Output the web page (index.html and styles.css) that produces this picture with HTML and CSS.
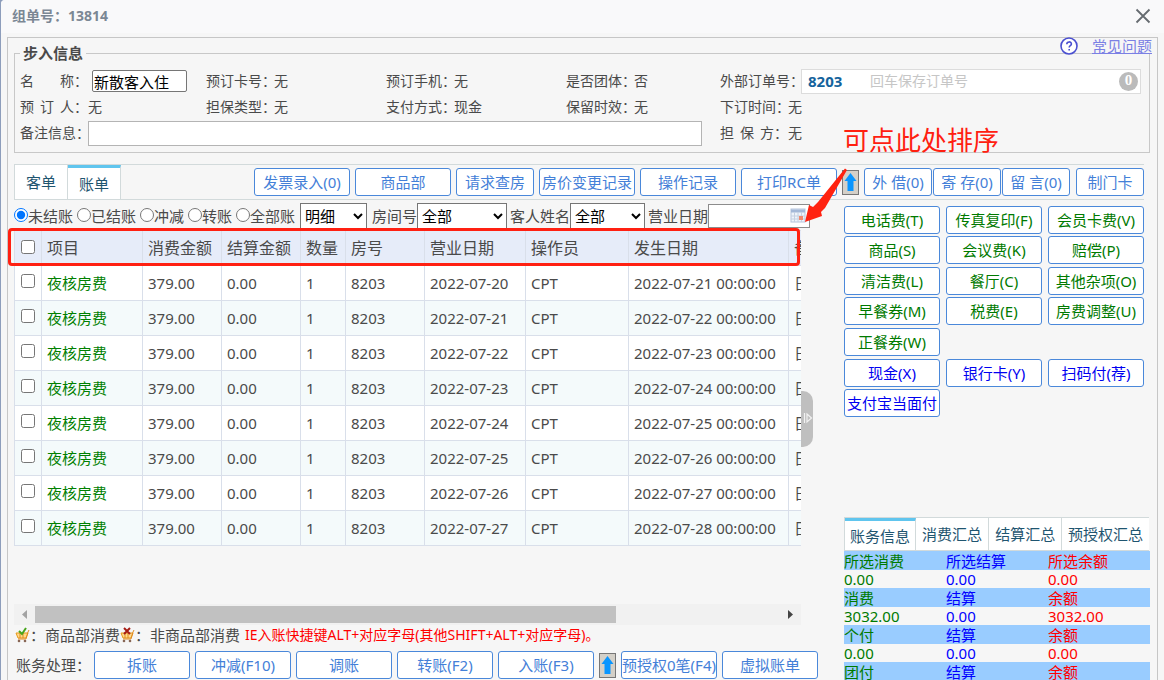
FILE: index.html
```html
<!DOCTYPE html>
<html lang="zh-CN">
<head>
<meta charset="utf-8">
<title>组单号：13814</title>
<link rel="stylesheet" href="styles.css">
</head>
<body>
<div class="window">
  <header class="titlebar">
    <h1>组单号：13814</h1>
    <button class="close" aria-label="关闭"><svg width="16" height="16" viewBox="0 0 16 16"><path d="M1.5 1.5l13 13M14.5 1.5l-13 13" stroke="#666b70" stroke-width="1.8" fill="none"/></svg></button>
  </header>
  <main class="panel">
    <div class="faq">
      <svg width="18" height="18" viewBox="0 0 18 18"><circle cx="9" cy="9" r="8" fill="#fff" stroke="#4a4fd0" stroke-width="1.6"/><path d="M6.8 7.2c0-3 4.6-3 4.6-.2 0 1.7-2.2 1.7-2.2 3.4M9.2 12v1.6" stroke="#4a4fd0" stroke-width="1.6" fill="none"/></svg>
      <a href="#">常见问题</a>
    </div>
    <fieldset class="info">
      <legend>步入信息</legend>
      <div class="info-grid">
        <div class="field"><label class="cap" for="guest"><span class="spread">名 称</span>：</label><input id="guest" class="guest" value="新散客入住"></div>
        <div class="field"><span class="cap">预订卡号：</span>无</div>
        <div class="field"><span class="cap">预订手机：</span>无</div>
        <div class="field"><span class="cap">是否团体：</span>否</div>
        <div class="field"><label class="cap order-cap" for="order">外部订单号：</label><div class="order"><b>8203</b><input id="order" placeholder="回车保存订单号"><span class="count">0</span></div></div>
        <div class="field"><span class="cap"><span class="spread">预 订 人</span>：</span>无</div>
        <div class="field"><span class="cap">担保类型：</span>无</div>
        <div class="field"><span class="cap">支付方式：</span>现金</div>
        <div class="field"><span class="cap">保留时效：</span>无</div>
        <div class="field"><span class="cap">下订时间：</span>无</div>
        <div class="field remark"><label class="cap" for="remark">备注信息：</label><input id="remark"></div>
        <div class="field"><span class="cap"><span class="spread">担 保 方</span>：</span>无</div>
      </div>
    </fieldset>

    <div class="toolbar">
      <nav class="tabs"><button class="tab">客单</button><button class="tab on">账单</button></nav>
      <div class="actions">
        <button class="btn">发票录入(0)</button>
        <button class="btn">商品部</button>
        <button class="btn mid">请求查房</button>
        <button class="btn">房价变更记录</button>
        <button class="btn">操作记录</button>
        <button class="btn">打印RC单</button>
        <button class="up" aria-label="展开"><svg width="15" height="23" viewBox="0 0 15 23"><path d="M7.5 2l6 8h-3v10h-6V10h-3z" fill="#0a96ff"/></svg></button>
        <div class="notes"><button class="btn small">外 借(0)</button><button class="btn small">寄 存(0)</button><button class="btn small">留 言(0)</button></div>
        <button class="btn small">制门卡</button>
      </div>
    </div>

    <div class="columns">
      <section class="bill">
        <div class="filters">
          <label><input type="radio" name="state" checked>未结账</label>
          <label><input type="radio" name="state">已结账</label>
          <label><input type="radio" name="state">冲减</label>
          <label><input type="radio" name="state">转账</label>
          <label><input type="radio" name="state">全部账</label>
          <select class="sel-kind" aria-label="类型"><option>明细</option></select>
          <label for="room">房间号</label><select id="room" class="sel-room"><option>全部</option></select>
          <label for="name">客人姓名</label><select id="name" class="sel-name"><option>全部</option></select>
          <label for="date">营业日期</label><span class="date"><input id="date"><svg width="16" height="16" viewBox="0 0 16 16"><rect x="1" y="1" width="14" height="13" fill="#eef3fa" stroke="#b5c4dc"/><path d="M1 3h14" stroke="#a4b8d8" stroke-width="3"/><path d="M1 8h14M1 11h14M4.500 4v10M8 4v10M11.500 4v10" stroke="#c5d0e2"/><rect x="9" y="8" width="4" height="4" fill="#f08a70"/></svg></span>
        </div>
        <div class="sheet-wrap">
          <div class="sheet">
            <table>
              <colgroup><col class="c27"><col class="c101"><col class="c79"><col class="c79"><col class="c45"><col class="c79"><col class="c101"><col class="c103"><col class="c160"><col class="c101"></colgroup>
              <thead><tr><th><input type="checkbox" aria-label="全选"></th><th>项目</th><th>消费金额</th><th>结算金额</th><th>数量</th><th>房号</th><th>营业日期</th><th>操作员</th><th>发生日期</th><th>备注</th></tr></thead>
              <tbody>
                <tr><td><input type="checkbox" aria-label="选择"></td><td>夜核房费</td><td>379.00</td><td>0.00</td><td>1</td><td>8203</td><td>2022-07-20</td><td>CPT</td><td>2022-07-21 00:00:00</td><td>日租</td></tr>
                <tr><td><input type="checkbox" aria-label="选择"></td><td>夜核房费</td><td>379.00</td><td>0.00</td><td>1</td><td>8203</td><td>2022-07-21</td><td>CPT</td><td>2022-07-22 00:00:00</td><td>日租</td></tr>
                <tr><td><input type="checkbox" aria-label="选择"></td><td>夜核房费</td><td>379.00</td><td>0.00</td><td>1</td><td>8203</td><td>2022-07-22</td><td>CPT</td><td>2022-07-23 00:00:00</td><td>日租</td></tr>
                <tr><td><input type="checkbox" aria-label="选择"></td><td>夜核房费</td><td>379.00</td><td>0.00</td><td>1</td><td>8203</td><td>2022-07-23</td><td>CPT</td><td>2022-07-24 00:00:00</td><td>日租</td></tr>
                <tr><td><input type="checkbox" aria-label="选择"></td><td>夜核房费</td><td>379.00</td><td>0.00</td><td>1</td><td>8203</td><td>2022-07-24</td><td>CPT</td><td>2022-07-25 00:00:00</td><td>日租</td></tr>
                <tr><td><input type="checkbox" aria-label="选择"></td><td>夜核房费</td><td>379.00</td><td>0.00</td><td>1</td><td>8203</td><td>2022-07-25</td><td>CPT</td><td>2022-07-26 00:00:00</td><td>日租</td></tr>
                <tr><td><input type="checkbox" aria-label="选择"></td><td>夜核房费</td><td>379.00</td><td>0.00</td><td>1</td><td>8203</td><td>2022-07-26</td><td>CPT</td><td>2022-07-27 00:00:00</td><td>日租</td></tr>
                <tr><td><input type="checkbox" aria-label="选择"></td><td>夜核房费</td><td>379.00</td><td>0.00</td><td>1</td><td>8203</td><td>2022-07-27</td><td>CPT</td><td>2022-07-28 00:00:00</td><td>日租</td></tr>
              </tbody>
            </table>
          </div>
          <div class="scrollbar">
            <svg width="21" height="21" viewBox="0 0 21 21"><path d="M13 6v9l-5-4.500z" fill="#a3a3a3"/></svg>
            <div class="track"><div class="thumb"></div></div>
            <svg width="21" height="21" viewBox="0 0 21 21"><path d="M8 6v9l5-4.500z" fill="#444"/></svg>
          </div>
          <button class="handle" aria-label="收起"><svg width="11" height="14" viewBox="0 0 11 14"><path d="M2.500 2v10M5 3l4.500 4L5 11z" fill="none" stroke="#f2f2f2" stroke-width="1.200"/></svg></button>
          <div class="sort-frame"></div>
        </div>
        <p class="legend-line"><svg width="15" height="16" viewBox="0 0 15 16"><path d="M1 6h12l-2 5H3z" fill="#ffd98a" stroke="#e69a1c"/><path d="M14 3l-1 2-2 7H3M5 6v5M8 6v5" fill="none" stroke="#e08a20"/><circle cx="4" cy="14" r="1.300" fill="#865"/><circle cx="10" cy="14" r="1.300" fill="#865"/><path d="M4 4l3 3 4-6" fill="none" stroke="#46a51c" stroke-width="2"/></svg><span>：商品部消费</span><svg width="15" height="16" viewBox="0 0 15 16"><path d="M1 6h12l-2 5H3z" fill="#ffd98a" stroke="#e69a1c"/><path d="M14 3l-1 2-2 7H3M5 6v5M8 6v5" fill="none" stroke="#e08a20"/><circle cx="4" cy="14" r="1.300" fill="#865"/><circle cx="10" cy="14" r="1.300" fill="#865"/><path d="M4 1l6 6M10 1L4 7" fill="none" stroke="#a51c14" stroke-width="2"/></svg><span>：非商品部消费</span><em>IE入账快捷键ALT+对应字母(其他SHIFT+ALT+对应字母)。</em></p>
        <div class="process">
          <span class="process-cap">账务处理：</span>
          <button class="btn">拆账</button>
          <button class="btn">冲减(F10)</button>
          <button class="btn">调账</button>
          <button class="btn">转账(F2)</button>
          <button class="btn">入账(F3)</button>
          <button class="up" aria-label="展开"><svg width="15" height="23" viewBox="0 0 15 23"><path d="M7.500 2l6 8h-3v10h-6V10h-3z" fill="#0a96ff"/></svg></button>
          <button class="btn">预授权0笔(F4)</button>
          <button class="btn">虚拟账单</button>
        </div>
      </section>

      <aside class="side">
        <div class="keys">
          <div class="group"><button class="btn">电话费(T)</button><button class="btn">传真复印(F)</button><button class="btn">会员卡费(V)</button><button class="btn">商品(S)</button><button class="btn">会议费(K)</button><button class="btn">赔偿(P)</button></div>
          <div class="group"><button class="btn">清洁费(L)</button><button class="btn">餐厅(C)</button><button class="btn">其他杂项(O)</button><button class="btn">早餐券(M)</button><button class="btn">税费(E)</button><button class="btn">房费调整(U)</button></div>
          <div class="group"><button class="btn">正餐券(W)</button></div>
          <div class="group pay"><button class="btn">现金(X)</button><button class="btn">银行卡(Y)</button><button class="btn">扫码付(荐)</button><button class="btn">支付宝当面付</button></div>
        </div>
        <nav class="tabs sum-tabs"><button class="tab on">账务信息</button><button class="tab">消费汇总</button><button class="tab">结算汇总</button><button class="tab">预授权汇总</button></nav>
        <table class="summary">
          <tr><th>所选消费</th><th>所选结算</th><th>所选余额</th></tr>
          <tr><td>0.00</td><td>0.00</td><td>0.00</td></tr>
          <tr><th>消费</th><th>结算</th><th>余额</th></tr>
          <tr><td>3032.00</td><td>0.00</td><td>3032.00</td></tr>
          <tr><th>个付</th><th>结算</th><th>余额</th></tr>
          <tr><td>0.00</td><td>0.00</td><td>0.00</td></tr>
          <tr><th>团付</th><th>结算</th><th>余额</th></tr>
        </table>
      </aside>
    </div>
    <div class="callout">可点此处排序</div>
    <svg class="arrow" width="48" height="60" viewBox="0 0 48 60"><path d="M45 2.500l2 1.500L25 42l-4 4 1 4-17 6 4-17 4 2 5-5z" fill="#ff2210"/></svg>
  </main>
</div>
</body>
</html>
```
FILE: styles.css
```css
* { box-sizing: border-box; }
html, body { margin: 0; height: 100%; overflow: hidden; }
body {
  background: #8d9dbb;
  color: #4a4a4a;
  font: 15px/18px "Noto Sans", "Noto Sans CJK SC", sans-serif;
}
button, input, select { font: inherit; color: inherit; margin: 0; }
button { cursor: pointer; padding: 0; white-space: nowrap; }

.window { margin-left: 1px; min-height: 100%; background: #f6f6f6; border-radius: 4px 0 0 0; }
.titlebar {
  display: flex; align-items: center; justify-content: space-between;
  height: 33px; padding: 0 13px 2px 11px; background: #f9f9fa; border-radius: 4px 0 0 0;
}
.titlebar h1 { margin: 0; font-size: 14px; color: #7b8794; }
.close { border: 0; background: none; width: 16px; height: 16px; }
.close svg { display: block; }

.panel {
  position: relative; margin: 4px 6px 0 6px; padding: 6px 7px 0 6px;
  border: 1px solid #c6c6c6; border-bottom: 0;
}
.faq { position: absolute; top: -1px; right: 5px; display: flex; align-items: center; gap: 14px; }
.faq a { color: #7b80e4; text-decoration: underline; }

.info { margin: 0; min-width: 0; border: 1px solid #c8c8c8; padding: 6px 8px 6px 5px; font-size: 14px; }
.info legend { margin-left: 0; padding: 0 3px; font-size: 15px; font-weight: bold; }
.info-grid { display: grid; grid-template-columns: 186px 180px 180px 154px minmax(0, 1fr); grid-auto-rows: 26px; }
.field { display: flex; align-items: center; min-width: 0; white-space: nowrap; }
.cap { display: flex; width: 68px; flex: none; }
.order-cap { width: 81px; }
.spread { width: 56px; text-align: justify; text-align-last: justify; }
.field input { border: 1px solid #767676; background: #fff; padding: 0 1px; color: #000; }
.guest { width: 95px; height: 22px; margin-left: 4px; font-size: 15px; line-height: 20px; border-radius: 2px; }
.remark { grid-column: 1 / 5; padding-right: 18px; }
.field #remark { flex: 1; height: 25px; border-color: #b4b4b4; }
.order { display: flex; flex: 1; align-items: center; height: 25px; padding: 0 2px 0 6px; border: 1px solid #dcdcdc; background: #fff; }
.order b { width: 61px; font-size: 15px; color: #14639c; }
.order #order { flex: 1; min-width: 0; border: 0; outline: 0; }
.order #order::placeholder { color: #c6c6c6; }
.count { width: 19px; height: 19px; border-radius: 50%; background: #bbb; color: #fff; text-align: center; font: bold 15px/17px "Liberation Serif", serif; }

.toolbar {
  display: flex; justify-content: space-between; margin: 11px 6px 0 0; height: 36px;
  border-top: 1px solid #d2dadb; border-bottom: 1px solid #d2dadb;
}
.tabs { display: flex; }
.tab { border: solid #d2dadb; border-width: 0 1px 0 0; background: #fff; color: #1f5570; padding: 0 12px; }
.tab.on { border-top: 3px solid #60c5ee; }
.toolbar .tabs { margin: 0 0 -1px; border-left: 1px solid #d2dadb; border-bottom: 1px solid #d2dadb; }
.toolbar .tab { width: 53px; padding: 0; }
.actions { display: flex; align-items: center; gap: 5px; }
.notes { display: flex; gap: 1px; margin-right: 1px; }
.btn { flex: none; width: 96px; height: 28px; border: 1px solid #4a88da; border-radius: 3px; background: #fff; color: #4480d8; }
.btn.mid { width: 78px; }
.btn.small { width: 68px; }
.up { flex: none; width: 17px; height: 25px; border: 1px solid #777; background: #d4d0c8; }
.up svg { display: block; }

.columns { display: grid; grid-template-columns: minmax(0, 1fr) 306px; gap: 24px; }
.filters { display: flex; align-items: center; height: 29px; padding-top: 3px; white-space: nowrap; }
.filters label { display: flex; align-items: center; }
.filters input[type="radio"] { width: 14px; height: 14px; margin: 0 0 2px; }
.filters label + label { margin-left: 4px; }
.filters select { height: 26px; padding: 0; border: 1px solid #767676; border-radius: 0; background: #fff; color: #000; }
.filters .sel-kind { width: 67px; margin: 0 5px; }
.filters .sel-room { width: 90px; margin-right: 3px; }
.filters .sel-name { width: 75px; margin-right: 3px; }
.date { display: flex; align-items: center; width: 102px; height: 24px; padding-right: 3px; border: 1px solid #8c8c8c; background: #fff; }
.date input { flex: 1; min-width: 0; border: 0; outline: 0; }

.sheet-wrap { position: relative; margin: 1px 19px 0 0; }
.sheet { height: 374px; overflow: hidden; }
.sheet table { width: 875px; table-layout: fixed; border-collapse: collapse; }
.c27 { width: 27px; }
.c45 { width: 45px; }
.c79 { width: 79px; }
.c101 { width: 101px; }
.c103 { width: 103px; }
.c160 { width: 160px; }
.sheet th, .sheet td { height: 35px; padding: 0 6px 1px 5px; border: 1px solid #d9dfea; text-align: left; font-weight: normal; white-space: nowrap; overflow: hidden; }
.sheet th { background: #e6ecf9; font-size: 16px; padding-bottom: 0; }
.sheet td { background: #fff; }
.sheet tr:nth-child(even) td { background: #f4fafb; }
.sheet td:nth-child(2) { color: #008000; }
.sheet input { display: block; width: 14px; height: 14px; margin: 0 1px 3px; }
.scrollbar { display: flex; height: 21px; background: #f1f1f1; }
.track { flex: 1; padding: 2px 0; }
.thumb { width: 78%; height: 17px; background: #c1c1c1; }
.handle { position: absolute; left: 100%; top: 161px; width: 12px; height: 56px; border: 0; border-radius: 0 10px 10px 0; background: #bfbfbf; color: #fff; }
.sort-frame { position: absolute; left: -6px; right: 1px; top: -2px; height: 38px; border: 3px solid #ff2012; border-radius: 4px; }

.legend-line { display: flex; align-items: center; height: 20px; margin: 0; padding-left: 1px; white-space: nowrap; }
.legend-line em { margin-left: 5px; font-size: 14px; font-style: normal; color: #f00; }
.process { display: flex; align-items: center; gap: 5px; margin-top: 6px; }
.process-cap { width: 75px; padding-left: 2px; white-space: nowrap; }

.side { min-width: 0; }
.keys { display: grid; gap: 3px; padding: 6px 6px 0 0; }
.group { display: grid; grid-template-columns: repeat(3, 96px); justify-content: space-between; gap: 2px 0; }
.keys .btn { color: #007a00; }
.keys .pay .btn { color: #0000f0; }
.sum-tabs { height: 34px; margin: 100px 1px 0 0; border: solid #d2dadb; border-width: 1px 0 1px 1px; }
.sum-tabs .tab { padding: 0; flex: 73 1 0; }
.sum-tabs .tab:first-child { flex-grow: 71; }
.sum-tabs .tab:last-child { flex-grow: 88; border-right: 0; }
.summary { width: 100%; table-layout: fixed; border-collapse: collapse; }
.summary th, .summary td { padding: 0; height: 18px; line-height: 18px; text-align: left; font-weight: normal; color: #007a00; }
.summary th { height: 19px; background: #99ccff; }
.summary tr > :nth-child(2) { color: #00f; }
.summary tr > :nth-child(3) { color: #f00; }

.callout { position: absolute; left: 835px; top: 85px; font-size: 26px; line-height: 34px; color: #ff2010; white-space: nowrap; }
.arrow { position: absolute; left: 792px; top: 128px; }
```
